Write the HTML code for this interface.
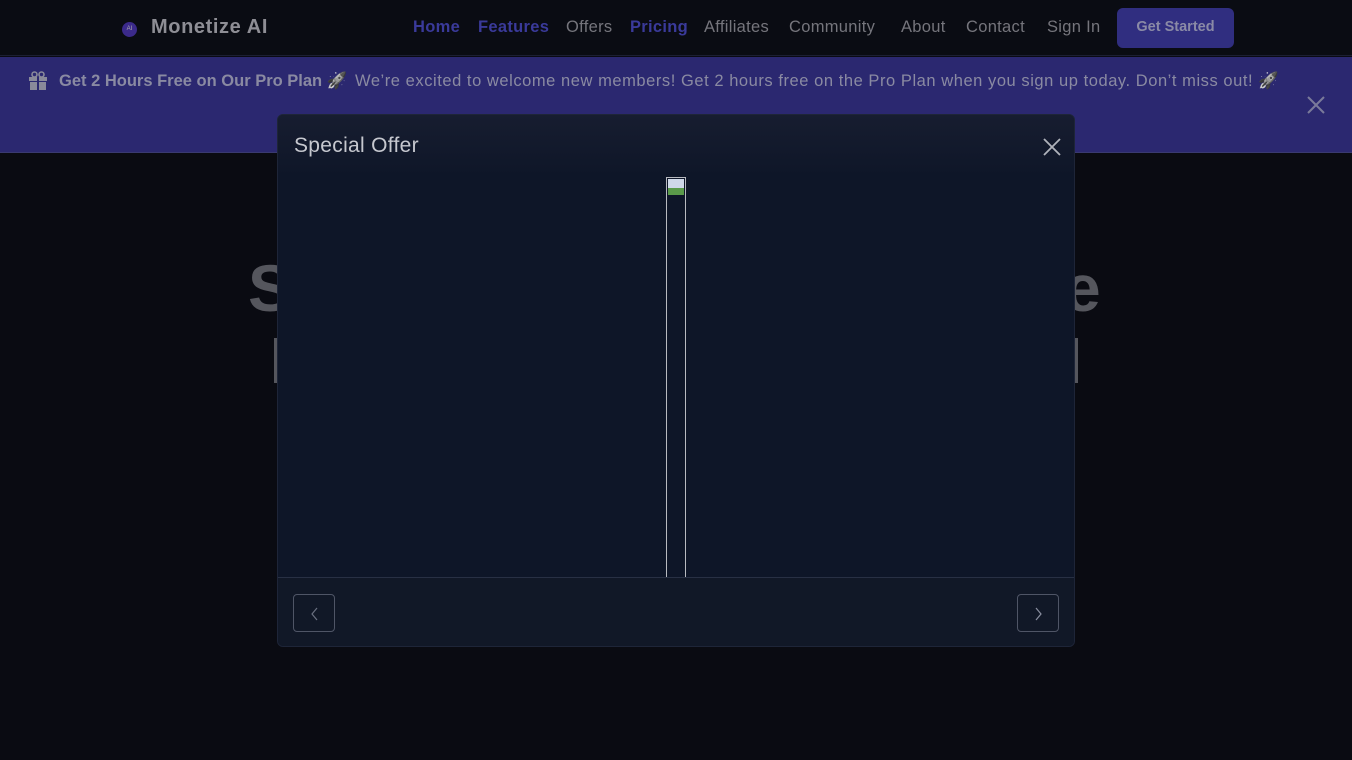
<!DOCTYPE html>
<html><head><meta charset="utf-8">
<style>
*{box-sizing:border-box;margin:0;padding:0}
body{width:1352px;height:760px;overflow:hidden;background:#0a0b12;font-family:"Liberation Sans",sans-serif;position:relative}
.nav{position:absolute;left:0;top:0;width:1352px;height:56px;background:#0a0c13;border-bottom:1px solid #1c1f33}
.logo{position:absolute;left:122px;top:22px;width:15px;height:15px;border-radius:50%;background:#3b2a8a;color:#aaa;font-size:6px;line-height:15px;text-align:center}
.brand{position:absolute;left:151px;top:16px;color:#8e8e95;font-weight:bold;font-size:20px;letter-spacing:.6px}
.links span{position:absolute;top:18px;font-size:16.5px;color:#75757c;white-space:nowrap;letter-spacing:.3px}
.links .a{color:#3a3a9a;font-weight:bold}
.btn{position:absolute;left:1117px;top:8px;width:117px;height:40px;background:#302e80;border-radius:6px;color:#8a8aa6;font-weight:bold;font-size:14.5px;text-align:center;line-height:39px}
.ban{position:absolute;left:0;top:57px;width:1352px;height:96px;background:#2b2870;border-bottom:1px solid #3a3a70}
.bt{position:absolute;left:59px;top:15px;font-size:16.5px;color:#8a8aa2;white-space:nowrap}
.bt b{position:absolute;left:0;top:0}
.bt span{position:absolute;left:296px;top:0;letter-spacing:.55px}
.em{filter:grayscale(1) brightness(.9)}
.bx{position:absolute;left:1306px;top:38px;width:20px;height:20px}
.hero{position:absolute;top:250px;font-size:66px;font-weight:bold;color:#55565d}
.bar{position:absolute;top:338px;width:3px;height:45px;background:#55565d}
.modal{position:absolute;left:277px;top:114px;width:798px;height:533px;background:#0e1628;border:1px solid #1e2538;border-radius:6px;overflow:hidden}
.mh{height:62px;background:linear-gradient(#171d30,#0e1628)}
.mt{position:absolute;left:16px;top:19px;color:#c6c8cf;font-size:21px;letter-spacing:.3px}
.mx{position:absolute;left:764px;top:22px;width:20px;height:20px}
.img{position:absolute;left:388px;top:62px;width:20px;height:400px;border:1px solid #b8bac0;border-bottom:none}
.foot{position:absolute;left:0;top:462px;width:798px;height:71px;background:#111827;border-top:1px solid #283044}
.nb{position:absolute;top:16px;width:42px;height:38px;border:1px solid #4f5566;border-radius:4px}
</style></head><body>
<div class="nav">
<div class="logo">AI</div>
<div class="brand">Monetize AI</div>
<div class="links"><span class="a" style="left:413px">Home</span><span class="a" style="left:478px">Features</span><span style="left:566px">Offers</span><span class="a" style="left:630px">Pricing</span><span style="left:704px">Affiliates</span><span style="left:789px">Community</span><span style="left:901px">About</span><span style="left:966px">Contact</span><span style="left:1047px">Sign In</span></div>
<div class="btn">Get Started</div>
</div>
<div class="ban">
<svg style="position:absolute;left:28px;top:14px" width="20" height="20" viewBox="0 0 20 20" fill="#8a8a9a"><rect x="1" y="6" width="18" height="4"/><rect x="2" y="11" width="16" height="8"/><rect x="9" y="6" width="2" height="13" fill="#2b2870"/><circle cx="6.5" cy="3.5" r="2.5" fill="none" stroke="#8a8a9a" stroke-width="1.6"/><circle cx="13.5" cy="3.5" r="2.5" fill="none" stroke="#8a8a9a" stroke-width="1.6"/></svg>
<div class="bt"><b>Get 2 Hours Free on Our Pro Plan <span class="em" style="position:static;letter-spacing:0">🚀</span></b><span>We’re excited to welcome new members! Get 2 hours free on the Pro Plan when you sign up today. Don’t miss out! <i class="em" style="font-style:normal">🚀</i></span></div>
<svg class="bx" viewBox="0 0 20 20" stroke="#7a7a9a" stroke-width="2"><path d="M2 2L18 18M18 2L2 18"/></svg>
</div>
<div class="hero" style="left:248px">S</div>
<div class="hero" style="left:1064px">e</div>
<div class="bar" style="left:274px"></div>
<div class="bar" style="left:1075px"></div>
<div class="modal">
<div class="mh"></div>
<div class="mt">Special Offer</div>
<svg class="mx" viewBox="0 0 20 20" stroke="#b0b3bb" stroke-width="1.8"><path d="M2 2L18 18M18 2L2 18"/></svg>
<div class="img"><div style="position:absolute;left:1px;top:1px;width:16px;height:16px;background:#cfd8e8"></div><div style="position:absolute;left:1px;top:10px;width:16px;height:7px;background:#5a9a4a"></div></div>
<div class="foot">
<div class="nb" style="left:15px"><svg width="42" height="38" viewBox="0 0 42 38" fill="none" stroke="#6a7080" stroke-width="1.2"><path d="M23 13L18 19L23 25"/></svg></div>
<div class="nb" style="left:739px"><svg width="42" height="38" viewBox="0 0 42 38" fill="none" stroke="#8a8fa0" stroke-width="1.2"><path d="M18 13L23 19L18 25"/></svg></div>
</div>
</div>
</body></html>
